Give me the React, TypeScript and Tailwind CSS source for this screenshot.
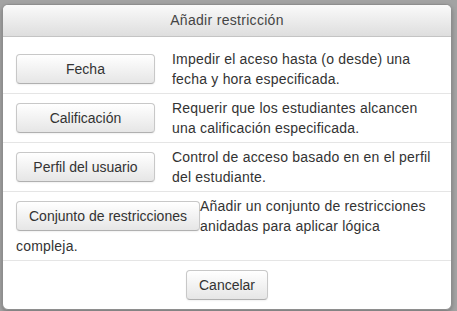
const options = [
  { label: "Fecha", text: "Impedir el aceso hasta (o desde) una fecha y hora especificada." },
  { label: "Calificación", text: "Requerir que los estudiantes alcancen una calificación especificada." },
  { label: "Perfil del usuario", text: "Control de acceso basado en en el perfil del estudiante." },
  { label: "Conjunto de restricciones", text: "Añadir un conjunto de restricciones anidadas para aplicar lógica compleja." },
]

const btn =
  "rounded-[4px] border border-[#c8c8c8] border-b-[#b0b0b0] bg-gradient-to-b from-white to-[#e6e6e6] px-3 py-1 text-[14px] leading-5 tracking-normal text-[#333] shadow-[inset_0_1px_0_rgba(255,255,255,0.3),0_1px_2px_rgba(0,0,0,0.06)]"

export default function App() {
  return (
    <div
      className="h-[311px] w-[457px] overflow-hidden bg-[#a3a3a3] pl-[2px] pt-[4px]"
      style={{ fontFamily: '"Liberation Sans", Arial, sans-serif' }}
    >
      <div className="w-[450px] overflow-hidden rounded-[6px] border border-[#8e8e8e] bg-white shadow-[0_2px_4px_rgba(0,0,0,0.25)]">
        <div className="flex h-[32px] items-center justify-center border-b border-[#c4c4c4] bg-gradient-to-b from-[#fafafa] to-[#dedede] text-[14px] tracking-[0.3px] text-[#444]">
          Añadir restricción
        </div>

        <div className="pt-[8px]">
          {options.map((o) => (
            <div key={o.label} className="flow-root border-b border-[#e5e5e5] py-[4px] pl-[13px] pr-[17px] text-[14px] leading-5 tracking-[0.2px] text-[#333]">
              <div className="float-left min-w-[156px] pt-[5px]">
                <button className={`${btn} min-w-[139px]`}>{o.label}</button>
              </div>
              {o.text}
            </div>
          ))}
        </div>

        <div className="flex justify-center py-[9px]">
          <button className={btn}>Cancelar</button>
        </div>
      </div>
    </div>
  )
}
